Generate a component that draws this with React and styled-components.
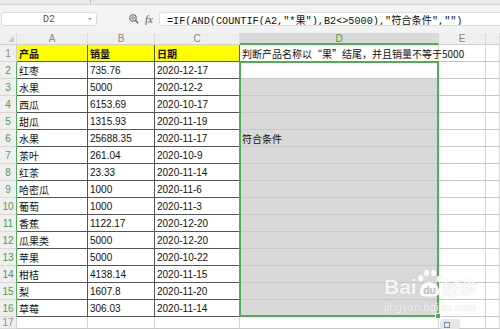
import React from "react";
import styled, { createGlobalStyle } from "styled-components";

const GlobalStyle = createGlobalStyle`
  html, body {
    margin: 0;
    padding: 0;
    width: 500px;
    height: 329px;
    overflow: hidden;
    background: #fff;
  }
  body {
    font-family: "Liberation Sans", "Noto Sans CJK SC", sans-serif;
  }
`;

const COLS = [17, 71, 67, 85, 199, 47, 14];
const HEAD_H = 12;
const ROW_H = 17;

const rows = [
  ["产品", "销量", "日期", "判断产品名称以“果”结尾，并且销量不等于5000"],
  ["红枣", "735.76", "2020-12-17", ""],
  ["水果", "5000", "2020-12-2", ""],
  ["西瓜", "6153.69", "2020-10-17", ""],
  ["甜瓜", "1315.93", "2020-11-19", ""],
  ["水果", "25688.35", "2020-11-17", "符合条件"],
  ["茶叶", "261.04", "2020-10-9", ""],
  ["红茶", "23.33", "2020-11-14", ""],
  ["哈密瓜", "1000", "2020-11-6", ""],
  ["葡萄", "1000", "2020-11-3", ""],
  ["香蕉", "1122.17", "2020-12-20", ""],
  ["瓜果类", "5000", "2020-12-20", ""],
  ["苹果", "5000", "2020-10-22", ""],
  ["柑桔", "4138.14", "2020-11-15", ""],
  ["梨", "1607.8", "2020-11-20", ""],
  ["草莓", "306.03", "2020-11-14", ""],
];

const Page = styled.div`
  width: 500px;
  height: 329px;
  overflow: hidden;
  background: #f3f3f3;
  display: flex;
  flex-direction: column;
`;

const TopStrip = styled.div`
  height: 4px;
  background: #e9e9e9;
  border-bottom: 1px solid #d6d6d6;
  display: flex;
  padding-left: 90px;
`;

const StripMark = styled.div`
  width: 1px;
  height: 4px;
  border-left: 1px dotted #b0b0b0;
`;

const FormulaBar = styled.div`
  height: 31px;
  display: flex;
  align-items: center;
  padding-left: 1px;
`;

const NameBox = styled.div`
  width: 96px;
  height: 14px;
  box-sizing: border-box;
  background: #fff;
  border: 1px solid #dcdcdc;
  border-radius: 3px;
  display: flex;
  align-items: center;
  justify-content: center;
  position: relative;
  font-size: 10px;
  color: #555;
  font-family: "Liberation Mono", monospace;
`;

const DropArrow = styled.span`
  position: absolute;
  right: 4px;
  top: 5px;
  width: 0;
  height: 0;
  border-left: 2px solid transparent;
  border-right: 2px solid transparent;
  border-top: 2px solid #999;
`;

const Tools = styled.div`
  display: flex;
  align-items: center;
  gap: 6px;
  margin-left: 32px;
  width: 30px;
`;

const Fx = styled.span`
  font-family: "Liberation Serif", serif;
  font-style: italic;
  font-size: 11px;
  color: #555;
`;

const FormulaInput = styled.div`
  flex: 1;
  height: 14px;
  box-sizing: border-box;
  background: #fff;
  border: 1px solid #dcdcdc;
  border-right: none;
  border-radius: 3px 0 0 3px;
  display: flex;
  align-items: center;
  padding-left: 7px;
  font-family: "Liberation Mono", "Noto Sans CJK SC", monospace;
  font-size: 10.2px;
  color: #111;
  white-space: nowrap;
  overflow: hidden;
`;

const Sheet = styled.div`
  position: relative;
  flex: 1;
  background: #fff;
  display: grid;
  grid-template-columns: ${COLS.map((c) => c + "px").join(" ")};
  grid-template-rows: ${HEAD_H}px repeat(16, ${ROW_H}px) 1fr;
`;

const Corner = styled.div`
  background: #efefef;
  border-right: 1px solid #d9d9d9;
  border-bottom: 1px solid #d0d0d0;
  box-sizing: border-box;
  position: relative;
  &::after {
    content: "";
    position: absolute;
    right: 2px;
    bottom: 2px;
    border-left: 6px solid transparent;
    border-bottom: 6px solid #c8c8c8;
  }
`;

const ColHead = styled.div`
  box-sizing: border-box;
  background: ${(p) => (p.$active ? "#d9d9d9" : "#efefef")};
  border-right: 1px solid #d9d9d9;
  border-bottom: ${(p) => (p.$active ? "2px solid #4caf50" : "1px solid #d0d0d0")};
  color: ${(p) => (p.$active ? "#4a9e45" : "#8a8a8a")};
  font-size: 10px;
  display: flex;
  align-items: center;
  justify-content: center;
`;

const RowHead = styled.div`
  box-sizing: border-box;
  background: #efefef;
  border-bottom: 1px solid #d9d9d9;
  border-right: ${(p) => (p.$active ? "1px solid #4caf50" : "1px solid #d0d0d0")};
  color: ${(p) => (p.$active ? "#4a9e45" : "#8a8a8a")};
  font-size: 10px;
  display: flex;
  align-items: center;
  justify-content: center;
`;

const Cell = styled.div`
  box-sizing: border-box;
  background: ${(p) => p.$bg || "transparent"};
  border-right: 1px solid ${(p) => (p.$dark ? "#555" : "#d6d6d6")};
  border-bottom: 1px solid ${(p) => (p.$dark ? "#555" : "#c8c8c8")};
  display: flex;
  align-items: center;
  padding-left: 2px;
  padding-top: 1px;
  font-size: 10px;
  font-family: ${(p) =>
    p.$cjk
      ? `"Noto Sans CJK SC", "Liberation Sans", sans-serif`
      : `"Liberation Sans", "Noto Sans CJK SC", sans-serif`};
  font-weight: ${(p) => (p.$bold ? 700 : 400)};
  color: #111;
  white-space: nowrap;
  overflow: ${(p) => (p.$overflow ? "visible" : "hidden")};
  position: relative;
  z-index: ${(p) => (p.$overflow ? 1 : 0)};
`;

const Selection = styled.div`
  position: absolute;
  left: ${COLS[0] + COLS[1] + COLS[2] + COLS[3] - 1}px;
  top: ${HEAD_H + ROW_H - 1}px;
  width: ${COLS[4] + 1}px;
  height: ${ROW_H * 15 + 1}px;
  box-sizing: border-box;
  border: 2px solid #4caf50;
  pointer-events: none;
  z-index: 2;
`;

const Handle = styled.div`
  position: absolute;
  right: -4px;
  bottom: -4px;
  width: 4px;
  height: 4px;
  background: #4caf50;
  border: 1px solid #fff;
`;

const PasteIcon = styled.div`
  position: absolute;
  left: 440px;
  top: ${HEAD_H + ROW_H * 16 + 2}px;
  width: 20px;
  height: 10px;
  background: #e6e6e6;
  border-radius: 2px;
  z-index: 3;
  &::after {
    content: "";
    position: absolute;
    left: 4px;
    top: 3px;
    width: 6px;
    height: 6px;
    border: 1px solid #6b8fc9;
    box-sizing: border-box;
  }
`;

const Watermark = styled.div`
  position: absolute;
  left: 384px;
  top: 236px;
  z-index: 4;
  color: rgba(255, 255, 255, 0.88);
  text-shadow: 0 0 1px rgba(0, 0, 0, 0.18);
  display: flex;
  flex-direction: column;
  align-items: flex-start;
  pointer-events: none;
`;

const Brand = styled.div`
  display: flex;
  align-items: flex-end;
  font-family: "Liberation Sans", sans-serif;
  font-weight: 700;
  font-size: 21px;
  line-height: 20px;
`;

const BrandCn = styled.span`
  font-family: "Noto Sans CJK SC", sans-serif;
  font-size: 17px;
  line-height: 20px;
  font-weight: 700;
  margin-left: 1px;
`;

const Site = styled.div`
  font-family: "Liberation Sans", sans-serif;
  font-size: 11px;
  letter-spacing: 0.2px;
  margin-top: 4px;
`;

function Paw() {
  return (
    <svg width="26" height="28" viewBox="0 0 22 24" style={{ marginLeft: -1 }}>
      <g fill="rgba(255,255,255,0.9)" stroke="rgba(0,0,0,0.12)" strokeWidth="0.4">
        <ellipse cx="4" cy="8" rx="2.4" ry="3" />
        <ellipse cx="9" cy="3.5" rx="2.4" ry="3" />
        <ellipse cx="15" cy="3.5" rx="2.4" ry="3" />
        <ellipse cx="19.5" cy="8.5" rx="2.2" ry="2.8" />
        <path d="M3 20 C3 14 8 11 11 11 C15 11 20 14 20 20 C20 23 17 24 11 24 C5 24 3 23 3 20Z" />
      </g>
      <text x="11.5" y="21.5" textAnchor="middle" fontFamily="Liberation Sans" fontWeight="700" fontSize="9" fill="#c4c4c4">du</text>
    </svg>
  );
}

function ZoomIcon() {
  return (
    <svg width="10" height="10" viewBox="0 0 10 10">
      <circle cx="4" cy="4" r="3.2" fill="none" stroke="#666" strokeWidth="1.1" />
      <circle cx="4" cy="4" r="1.3" fill="none" stroke="#666" strokeWidth="0.8" />
      <line x1="6.3" y1="6.3" x2="9.3" y2="9.3" stroke="#666" strokeWidth="1.4" />
    </svg>
  );
}

const letters = ["A", "B", "C", "D", "E", ""];

export default function App() {
  return (
    <>
      <GlobalStyle />
      <Page>
        <TopStrip>
          <StripMark />
        </TopStrip>
        <FormulaBar>
          <NameBox>
            D2
            <DropArrow />
          </NameBox>
          <Tools>
            <ZoomIcon />
            <Fx>fx</Fx>
          </Tools>
          <FormulaInput>=IF(AND(COUNTIF(A2,"*果"),B2&lt;&gt;5000),"符合条件","")</FormulaInput>
        </FormulaBar>
        <Sheet>
          <Corner />
          {letters.map((l, i) => (
            <ColHead key={i} $active={l === "D"}>
              {l}
            </ColHead>
          ))}
          {rows.map((r, ri) => (
            <React.Fragment key={ri}>
              <RowHead $active={ri > 0}>{ri + 1}</RowHead>
              {r.slice(0, 3).map((v, ci) => (
                <Cell key={ci} $dark $bg={ri === 0 ? "#ffff00" : undefined} $bold={ri === 0}>
                  {v}
                </Cell>
              ))}
              <Cell $cjk $overflow={ri === 0} $bg={ri > 1 ? "#d9d9d9" : undefined}>
                {r[3]}
              </Cell>
              <Cell />
              <Cell />
            </React.Fragment>
          ))}
          <RowHead>17</RowHead>
          {letters.map((_, i) => (
            <Cell key={i} />
          ))}
          <Selection>
            <Handle />
          </Selection>
          <PasteIcon />
          <Watermark>
            <Brand>
              Bai
              <Paw />
              <BrandCn>经验</BrandCn>
            </Brand>
            <Site>jingyan.baidu.com</Site>
          </Watermark>
        </Sheet>
      </Page>
    </>
  );
}
